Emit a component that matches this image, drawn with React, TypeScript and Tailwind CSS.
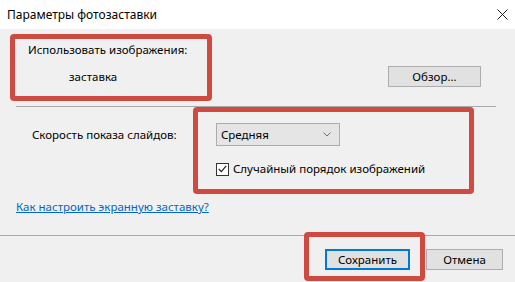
import React from "react";

// Окно «Параметры фотозаставки» с красными пометками поверх
export default function App() {
  return (
    <div
      className="relative w-[515px] h-[282px] overflow-hidden bg-[#f0f0f0] text-[11.5px] text-black"
      style={{ fontFamily: '"Noto Sans", "Open Sans", sans-serif' }}
    >
      {/* заголовок окна */}
      <div className="flex h-[29px] items-center justify-between bg-white pl-[7px] pr-[7px]">
        <span className="text-[12px] leading-4">Параметры фотозаставки</span>
        <svg width="11" height="11" viewBox="0 0 11 11" className="text-[#222]">
          <path d="M0.5 0.5 L10.5 10.5 M10.5 0.5 L0.5 10.5" stroke="currentColor" strokeWidth="1" />
        </svg>
      </div>

      {/* изображения */}
      <div className="flex justify-between pl-[28px] pr-[34px] pt-[13px]">
        <div>
          <div className="leading-4">Использовать изображения:</div>
          <div className="mt-[11px] pl-[41px] leading-4">заставка</div>
        </div>
        <button className="mt-[24px] h-[21px] w-[93px] border border-[#adadad] bg-[#e1e1e1] leading-4">
          Обзор...
        </button>
      </div>

      <div className="ml-[16px] mr-[19px] mt-[19px] h-px bg-[#a9a9a9]" />

      {/* скорость */}
      <div className="mt-[16px] flex items-center pl-[32px]">
        <span className="w-[184px] leading-4">Скорость показа слайдов:</span>
        <div className="flex h-[23px] w-[124px] items-center justify-between border border-[#acacac] bg-[#e5e5e5] pl-[4px] pr-[8px]">
          <span className="leading-4">Средняя</span>
          <svg width="8" height="5" viewBox="0 0 8 5">
            <path d="M0.5 0.5 L4 4 L7.5 0.5" fill="none" stroke="#707070" strokeWidth="1" />
          </svg>
        </div>
      </div>

      <div className="mt-[15px] flex items-center gap-[4px] pl-[216px]">
        <div className="flex h-[13px] w-[13px] items-center justify-center border border-[#333] bg-white">
          <svg width="9" height="8" viewBox="0 0 9 8">
            <path d="M0.8 4 L3.3 6.6 L8.2 0.9" fill="none" stroke="#222" strokeWidth="1.2" />
          </svg>
        </div>
        <span className="leading-4">Случайный порядок изображений</span>
      </div>

      <div className="mt-[22px] pl-[16px] leading-4">
        <a className="text-[#0066cc] underline">Как настроить экранную заставку?</a>
      </div>

      <div className="mt-[20px] h-px bg-[#a9a9a9]" />

      {/* кнопки */}
      <div className="mt-[13px] flex justify-end gap-[16px] pr-[12px]">
        <button className="h-[21px] w-[85px] border-2 border-[#0078d7] bg-[#e1e1e1] leading-4">
          Сохранить
        </button>
        <button className="h-[21px] w-[77px] border border-[#adadad] bg-[#e1e1e1] leading-4">
          Отмена
        </button>
      </div>

      {/* красные пометки */}
      <div className="pointer-events-none absolute left-[10px] top-[34px] h-[67px] w-[202px] rounded-[4px] border-[5px] border-[#cf4b41]" />
      <div className="pointer-events-none absolute left-[193px] top-[107px] h-[87px] w-[281px] rounded-[4px] border-[5px] border-[#cf4b41]" />
      <div className="pointer-events-none absolute left-[304px] top-[232px] h-[49px] w-[121px] rounded-[4px] border-[5px] border-[#cf4b41]" />
    </div>
  );
}
